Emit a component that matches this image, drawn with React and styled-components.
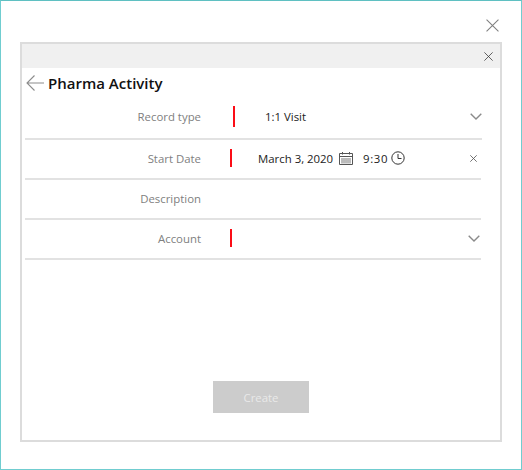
import styled, { createGlobalStyle } from 'styled-components'

const Global = createGlobalStyle`
  html, body { margin: 0; padding: 0; background: #fff; }
  body { font-family: "Open Sans", "Noto Sans", sans-serif; }
`

const CloseIcon = ({ size, color = '#777', width = 1 }) => (
  <svg width={size} height={size} viewBox="0 0 12 12" fill="none" stroke={color} strokeWidth={width}>
    <path d="M0.5 0.5L11.5 11.5M11.5 0.5L0.5 11.5" />
  </svg>
)

const Chevron = () => (
  <svg width="12" height="7" viewBox="0 0 12 7" fill="none" stroke="#8a8a8a" strokeWidth="1.4">
    <path d="M0.7 0.7L6 6L11.3 0.7" />
  </svg>
)

const BackArrow = () => (
  <svg width="18" height="16" viewBox="0 0 18 16" fill="none" stroke="#8c8c8c" strokeWidth="1.1">
    <path d="M18 8H1M8.5 0.5L1 8L8.5 15.5" />
  </svg>
)

const CalendarIcon = () => (
  <svg width="14" height="13" viewBox="0 0 14 13" fill="none" stroke="#555" strokeWidth="1">
    <path d="M0.5 1.5H13.5V12.5H0.5ZM0.5 4.5H13.5M3.5 0V2.5M10.5 0V2.5" />
    <path d="M3 6V11.5M5 6V11.5M7 6V11.5M9 6V11.5M11 6V11.5" strokeWidth="0.8" />
  </svg>
)

const ClockIcon = () => (
  <svg width="14" height="14" viewBox="0 0 14 14" fill="none" stroke="#333" strokeWidth="1">
    <circle cx="7" cy="7" r="6.2" />
    <path d="M7 3V7.5H10.5" />
  </svg>
)

export default function App() {
  return (
    <Window>
      <Global />
      <TopBar>
        <CloseIcon size={13} color="#808080" />
      </TopBar>
      <Panel>
        <PanelHeader>
          <CloseIcon size={9} color="#333" />
        </PanelHeader>
        <Body>
          <TitleRow>
            <BackArrow />
            <Title>Pharma Activity</Title>
          </TitleRow>

          <Row $first>
            <Label>Record type</Label>
            <Marker $left={32} $height={21} />
            <Value $left={30}>1:1 Visit</Value>
            <RowEnd $right={0}><Chevron /></RowEnd>
          </Row>

          <Row>
            <Label>Start Date</Label>
            <Marker $left={29} $height={18} />
            <Value $left={26}>
              March 3, 2020
              <CalendarIcon />
              <Time>9:30</Time>
              <ClockIcon />
            </Value>
            <RowEnd $right={4}><CloseIcon size={7} color="#555" width={1.4} /></RowEnd>
          </Row>

          <Row>
            <Label>Description</Label>
          </Row>

          <Row>
            <Label>Account</Label>
            <Marker $left={29} $height={18} />
            <RowEnd $right={1}><Chevron /></RowEnd>
          </Row>

          <Footer>
            <CreateButton disabled>Create</CreateButton>
          </Footer>
        </Body>
      </Panel>
    </Window>
  )
}

const Window = styled.div`
  box-sizing: border-box;
  width: 522px;
  height: 470px;
  padding: 0 19px;
  border: 1px solid #70cdd0;
  border-top-color: #5fc0c2;
  display: flex;
  flex-direction: column;
  overflow: hidden;
`

const TopBar = styled.div`
  height: 41px;
  flex: none;
  display: flex;
  justify-content: flex-end;
  align-items: flex-start;
  padding: 18px 3px 0 0;
  box-sizing: border-box;
`

const Panel = styled.div`
  box-sizing: border-box;
  width: 482px;
  height: 400px;
  border: 2px solid #dcdcdc;
  display: flex;
  flex-direction: column;
`

const PanelHeader = styled.div`
  height: 24px;
  flex: none;
  background: #f0f0f0;
  display: flex;
  align-items: center;
  justify-content: flex-end;
  padding-right: 7px;
`

const Body = styled.div`
  flex: 1;
  display: flex;
  flex-direction: column;
  padding: 0 19px 0 3px;
`

const TitleRow = styled.div`
  height: 30px;
  flex: none;
  display: flex;
  align-items: center;
  gap: 4px;
  padding-left: 1px;
`

const Title = styled.h1`
  margin: 0;
  font-size: 15px;
  font-weight: 600;
  color: #111;
`

const Row = styled.div`
  box-sizing: border-box;
  height: ${(p) => (p.$first ? '42px' : '40px')};
  margin-right: ${(p) => (p.$first ? '-1px' : '0')};
  padding-bottom: ${(p) => (p.$first ? '4px' : '2px')};
  border-bottom: 2px solid #e2e2e2;
  display: flex;
  align-items: center;
  font-size: 11.4px;
`

const Label = styled.span`
  width: 176px;
  flex: none;
  text-align: right;
  color: #808080;
`

const Marker = styled.span`
  width: 2px;
  height: ${(p) => p.$height}px;
  flex: none;
  margin-left: ${(p) => p.$left}px;
  background: #fb0d16;
`

const Value = styled.span`
  display: flex;
  align-items: center;
  gap: 6px;
  margin-left: ${(p) => p.$left}px;
  color: #222;
  white-space: nowrap;
`

const Time = styled.span`
  margin-left: 4px;
  margin-right: -3px;
  letter-spacing: 0.6px;
`

const RowEnd = styled.span`
  margin-left: auto;
  display: flex;
  padding-right: ${(p) => p.$right}px;
`

const Footer = styled.div`
  margin-top: auto;
  display: flex;
  justify-content: center;
  padding: 0 0 27px 16px;
`

const CreateButton = styled.button`
  width: 96px;
  height: 32px;
  border: none;
  background: #cccccc;
  color: #e9e9e9;
  font-family: inherit;
  font-size: 11.4px;
`
